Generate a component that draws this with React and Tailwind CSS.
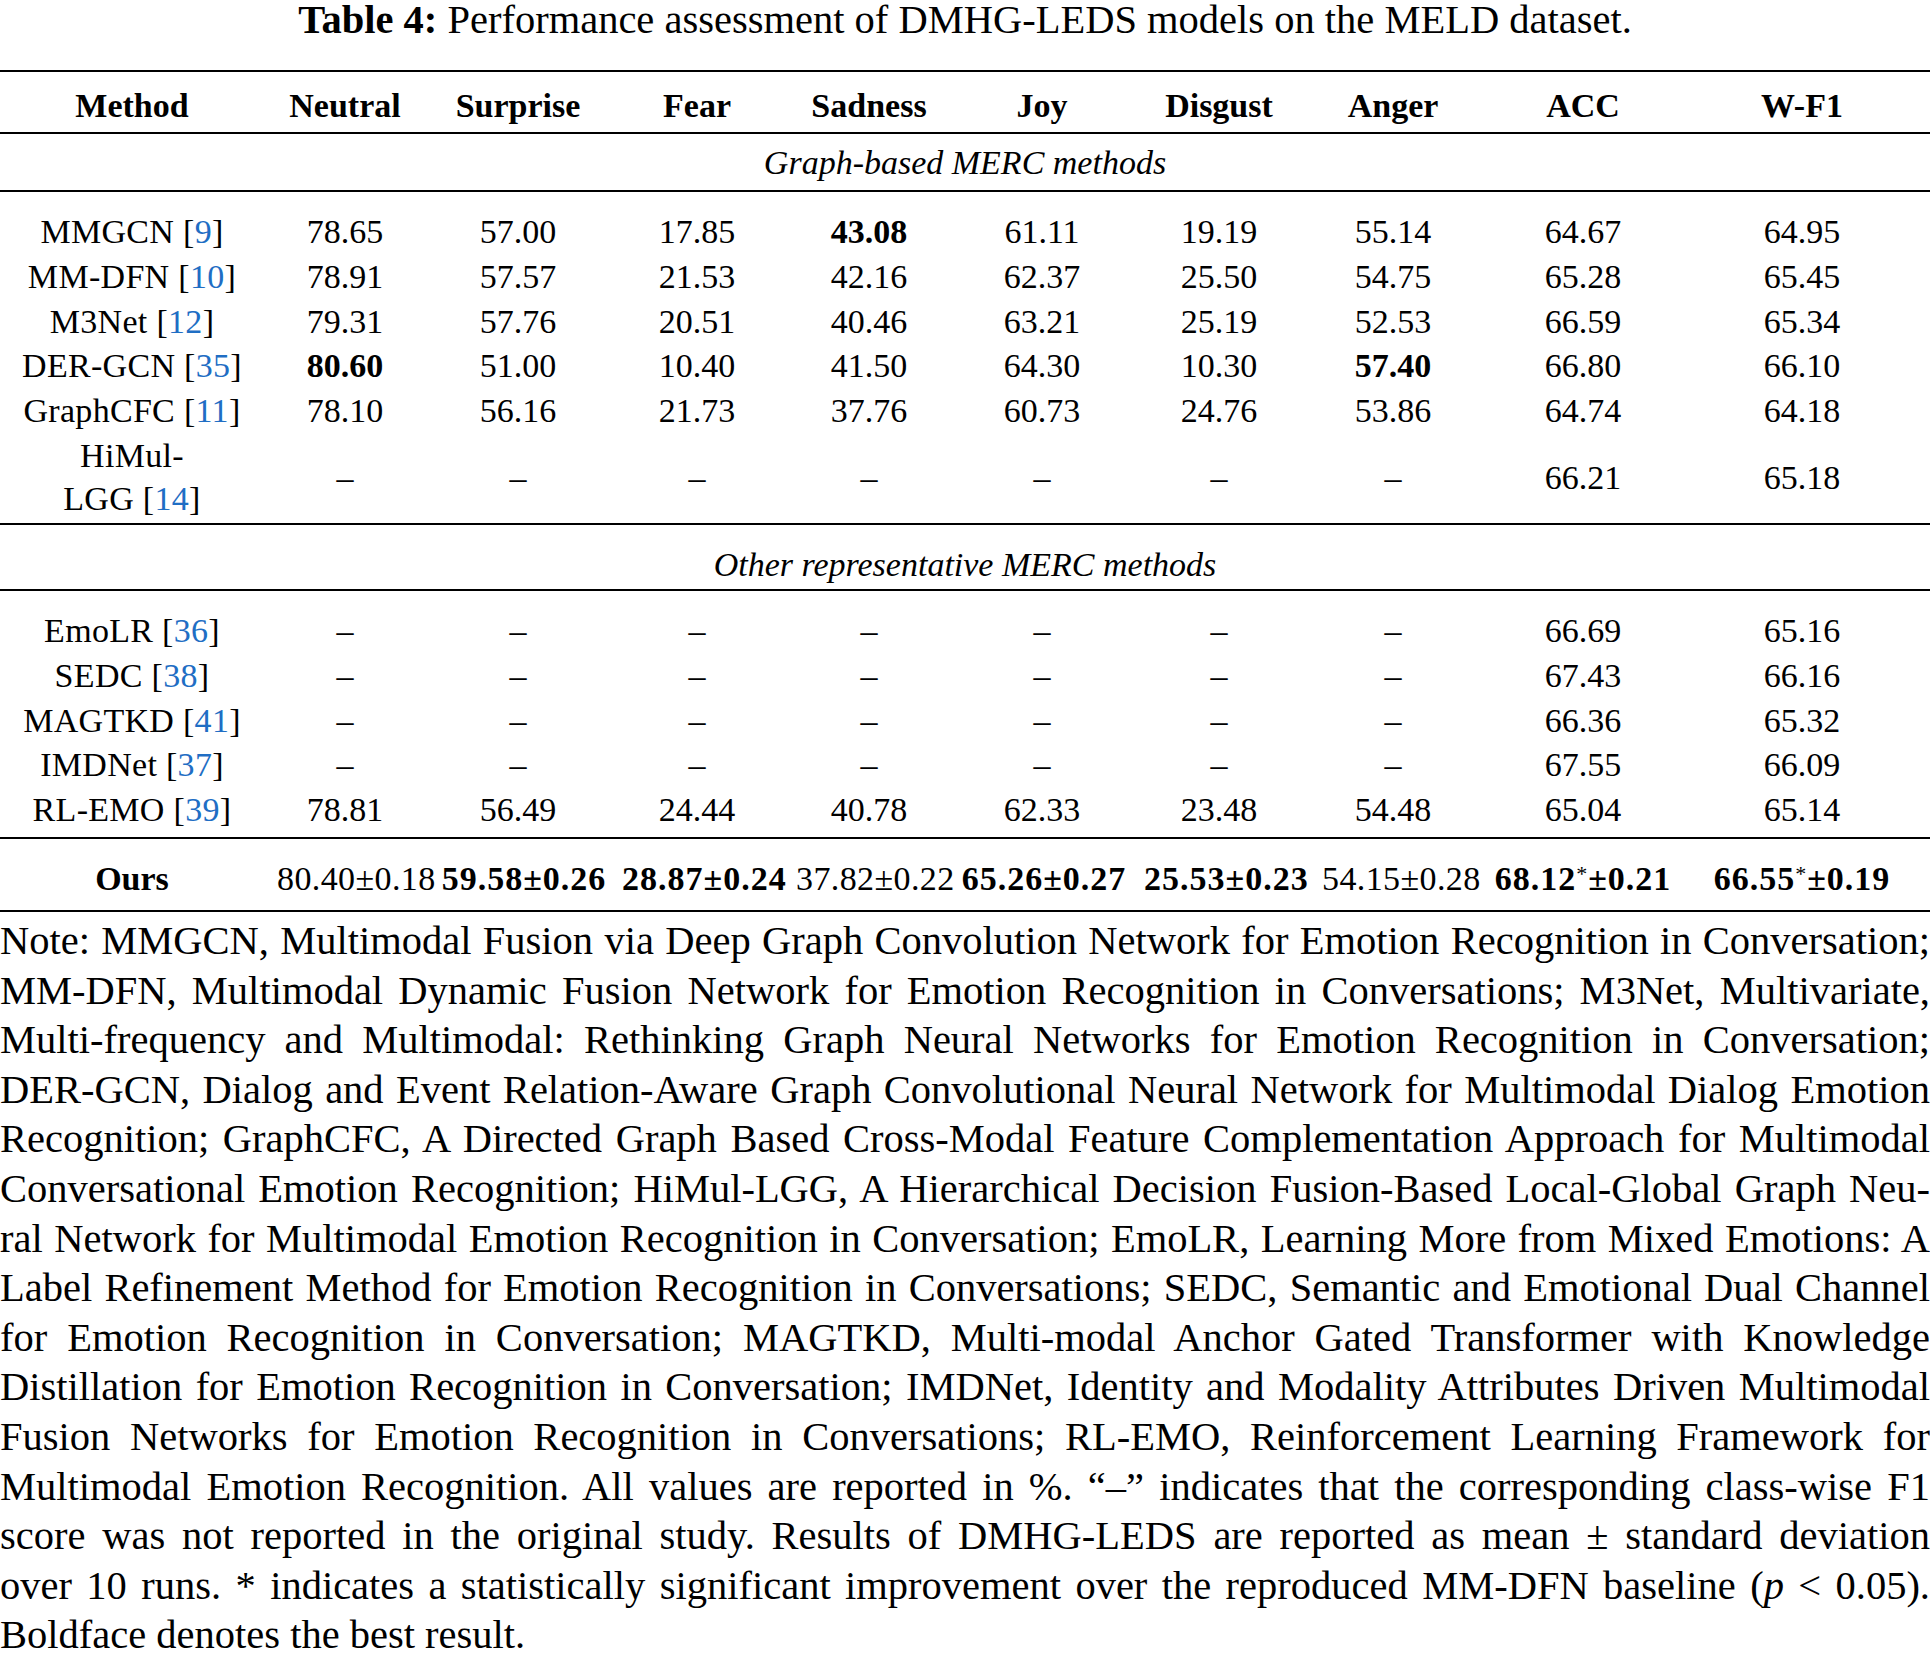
import React from "react";

const COLS =
  "grid grid-cols-[264px_162px_184px_174px_170px_176px_178px_170px_210px_228px] pr-[14px]";

function Ref({ n }) {
  return (
    <span>
      [<span className="text-[#1f6ec4]">{n}</span>]
    </span>
  );
}

const D = "–";

const group1 = [
  ["MMGCN", "9", ["78.65", "57.00", "17.85", "!43.08", "61.11", "19.19", "55.14", "64.67", "64.95"]],
  ["MM-DFN", "10", ["78.91", "57.57", "21.53", "42.16", "62.37", "25.50", "54.75", "65.28", "65.45"]],
  ["M3Net", "12", ["79.31", "57.76", "20.51", "40.46", "63.21", "25.19", "52.53", "66.59", "65.34"]],
  ["DER-GCN", "35", ["!80.60", "51.00", "10.40", "41.50", "64.30", "10.30", "!57.40", "66.80", "66.10"]],
  ["GraphCFC", "11", ["78.10", "56.16", "21.73", "37.76", "60.73", "24.76", "53.86", "64.74", "64.18"]],
];

const group2 = [
  ["EmoLR", "36", [D, D, D, D, D, D, D, "66.69", "65.16"]],
  ["SEDC", "38", [D, D, D, D, D, D, D, "67.43", "66.16"]],
  ["MAGTKD", "41", [D, D, D, D, D, D, D, "66.36", "65.32"]],
  ["IMDNet", "37", [D, D, D, D, D, D, D, "67.55", "66.09"]],
  ["RL-EMO", "39", ["78.81", "56.49", "24.44", "40.78", "62.33", "23.48", "54.48", "65.04", "65.14"]],
];

function Val({ v }) {
  if (v.startsWith("!")) return <span className="font-bold">{v.slice(1)}</span>;
  return <span>{v}</span>;
}

function DataRow({ name, refn, vals }) {
  return (
    <div className={`${COLS} leading-[44.8px]`}>
      <div className="text-center whitespace-nowrap tracking-[0.3px]">
        {name} <Ref n={refn} />
      </div>
      {vals.map((v, i) => (
        <div key={i} className="text-center whitespace-nowrap">
          <Val v={v} />
        </div>
      ))}
    </div>
  );
}

const headers = ["Method", "Neutral", "Surprise", "Fear", "Sadness", "Joy", "Disgust", "Anger", "ACC", "W-F1"];

const ours = [
  { m: "80.40", s: "0.18", b: false, pad: "pl-[13px]" },
  { m: "59.58", s: "0.26", b: true, pad: "pl-[12px]" },
  { m: "28.87", s: "0.24", b: true, pad: "pl-[12px]" },
  { m: "37.82", s: "0.22", b: false, pad: "pl-[12px]" },
  { m: "65.26", s: "0.27", b: true, pad: "pl-[4px]" },
  { m: "25.53", s: "0.23", b: true, pad: "pl-[14px]" },
  { m: "54.15", s: "0.28", b: false, pad: "pl-[14px]" },
  { m: "68.12", s: "0.21", b: true, star: true, pad: "" },
  { m: "66.55", s: "0.19", b: true, star: true, pad: "" },
];

const noteLines = [
  "Note: MMGCN, Multimodal Fusion via Deep Graph Convolution Network for Emotion Recognition in Conversation;",
  "MM-DFN, Multimodal Dynamic Fusion Network for Emotion Recognition in Conversations; M3Net, Multivariate,",
  "Multi-frequency and Multimodal: Rethinking Graph Neural Networks for Emotion Recognition in Conversation;",
  "DER-GCN, Dialog and Event Relation-Aware Graph Convolutional Neural Network for Multimodal Dialog Emotion",
  "Recognition; GraphCFC, A Directed Graph Based Cross-Modal Feature Complementation Approach for Multimodal",
  "Conversational Emotion Recognition; HiMul-LGG, A Hierarchical Decision Fusion-Based Local-Global Graph Neu-",
  "ral Network for Multimodal Emotion Recognition in Conversation; EmoLR, Learning More from Mixed Emotions: A",
  "Label Refinement Method for Emotion Recognition in Conversations; SEDC, Semantic and Emotional Dual Channel",
  "for Emotion Recognition in Conversation; MAGTKD, Multi-modal Anchor Gated Transformer with Knowledge",
  "Distillation for Emotion Recognition in Conversation; IMDNet, Identity and Modality Attributes Driven Multimodal",
  "Fusion Networks for Emotion Recognition in Conversations; RL-EMO, Reinforcement Learning Framework for",
  "Multimodal Emotion Recognition. All values are reported in %. “–” indicates that the corresponding class-wise F1",
  "score was not reported in the original study. Results of DMHG-LEDS are reported as mean ± standard deviation",
];

export default function App() {
  return (
    <div className="w-[1930px] bg-white text-black font-['Liberation_Serif',serif]">
      {/* Title */}
      <div className="text-center text-[40.5px] leading-[40px] whitespace-nowrap">
        <span className="font-bold">Table 4:</span> Performance assessment of DMHG-LEDS models on the MELD dataset.
      </div>

      <div className="mt-[30px] border-t-[2px] border-black" />

      {/* Header */}
      <div className={`${COLS} pt-[14px] pb-[6px] text-[34px] leading-[40px] font-bold border-b-[2px] border-black`}>
        {headers.map((h) => (
          <div key={h} className="text-center">
            {h}
          </div>
        ))}
      </div>

      <div className="text-[34px]">
        {/* Section 1 label */}
        <div className="pt-[9px] pb-[7px] text-center italic leading-[40px] border-b-[2px] border-black">
          Graph-based MERC methods
        </div>

        {/* Group 1 */}
        <div className="pt-[18px] pb-[2px] border-b-[2px] border-black">
          {group1.map(([n, r, v]) => (
            <DataRow key={n} name={n} refn={r} vals={v} />
          ))}
          <div className={`${COLS} leading-[43.5px] items-center`}>
            <div className="text-center tracking-[0.3px]">
              HiMul-
              <br />
              LGG <Ref n="14" />
            </div>
            {[D, D, D, D, D, D, D, "66.21", "65.18"].map((v, i) => (
              <div key={i} className="text-center">
                {v}
              </div>
            ))}
          </div>
        </div>

        {/* Section 2 label */}
        <div className="pt-[20px] pb-[4px] text-center italic leading-[40px] border-b-[2px] border-black">
          Other representative MERC methods
        </div>

        {/* Group 2 */}
        <div className="pt-[18px] pb-[4px] border-b-[2px] border-black">
          {group2.map(([n, r, v]) => (
            <DataRow key={n} name={n} refn={r} vals={v} />
          ))}
        </div>

        {/* Ours */}
        <div className={`${COLS} pt-[20px] pb-[7px] leading-[40px] border-b-[2px] border-black`}>
          <div className="text-center font-bold">Ours</div>
          {ours.map((o, i) => (
            <div
              key={i}
              className={`text-center whitespace-nowrap ${o.pad} ${o.b ? "font-bold tracking-[1px]" : "tracking-[0.4px]"}`}
            >
              {o.m}
              {o.star ? <span className="relative -top-[9px] text-[22px] font-normal">*</span> : null}±{o.s}
            </div>
          ))}
        </div>
      </div>

      {/* Note */}
      <div className="mt-[4px] text-[40.5px] leading-[49.6px]">
        {noteLines.map((l, i) => (
          <div key={i} className="text-justify [text-align-last:justify]">
            {l}
          </div>
        ))}
        <div className="text-justify [text-align-last:justify]">
          over 10 runs. * indicates a statistically significant improvement over the reproduced MM-DFN baseline (
          <span className="italic">p</span> &lt; 0.05).
        </div>
        <div>Boldface denotes the best result.</div>
      </div>
    </div>
  );
}
